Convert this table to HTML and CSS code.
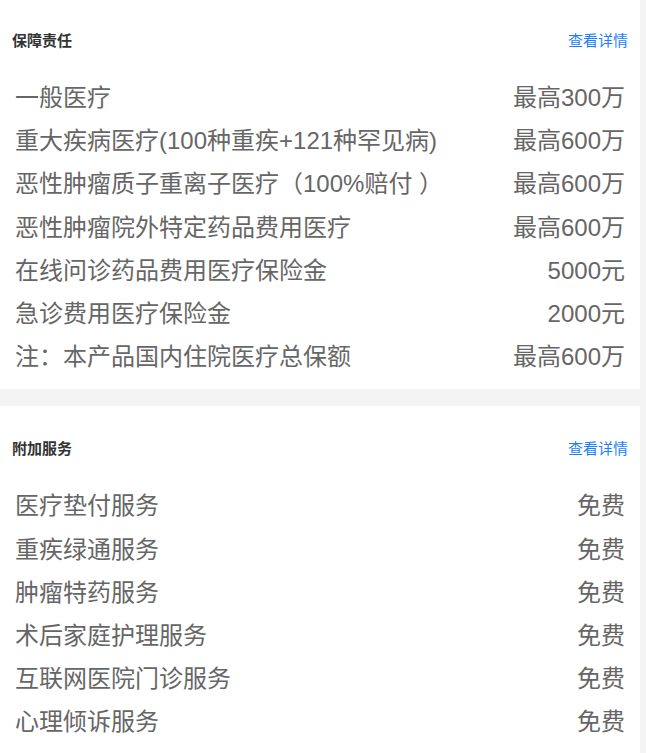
FILE: index.html
```html
<!DOCTYPE html>
<html lang="zh-CN">
<head>
<meta charset="utf-8">
<title>保障责任</title>
<link rel="stylesheet" href="styles.css">
</head>
<body>
<div class="page">
  <section class="card card-first">
    <div class="card-head">
      <h2 class="card-title">保障责任</h2>
      <a class="card-link" href="#">查看详情</a>
    </div>
    <ul class="rows">
      <li class="row"><span class="row-name">一般医疗</span><span class="row-value">最高300万</span></li>
      <li class="row"><span class="row-name">重大疾病医疗(100种重疾+121种罕见病)</span><span class="row-value">最高600万</span></li>
      <li class="row"><span class="row-name">恶性肿瘤质子重离子医疗（100%赔付 ）</span><span class="row-value">最高600万</span></li>
      <li class="row"><span class="row-name">恶性肿瘤院外特定药品费用医疗</span><span class="row-value">最高600万</span></li>
      <li class="row"><span class="row-name">在线问诊药品费用医疗保险金</span><span class="row-value">5000元</span></li>
      <li class="row"><span class="row-name">急诊费用医疗保险金</span><span class="row-value">2000元</span></li>
      <li class="row"><span class="row-name">注：本产品国内住院医疗总保额</span><span class="row-value">最高600万</span></li>
    </ul>
  </section>
  <section class="card">
    <div class="card-head">
      <h2 class="card-title">附加服务</h2>
      <a class="card-link" href="#">查看详情</a>
    </div>
    <ul class="rows">
      <li class="row"><span class="row-name">医疗垫付服务</span><span class="row-value">免费</span></li>
      <li class="row"><span class="row-name">重疾绿通服务</span><span class="row-value">免费</span></li>
      <li class="row"><span class="row-name">肿瘤特药服务</span><span class="row-value">免费</span></li>
      <li class="row"><span class="row-name">术后家庭护理服务</span><span class="row-value">免费</span></li>
      <li class="row"><span class="row-name">互联网医院门诊服务</span><span class="row-value">免费</span></li>
      <li class="row"><span class="row-name">心理倾诉服务</span><span class="row-value">免费</span></li>
    </ul>
  </section>
</div>
</body>
</html>
```

FILE: styles.css
```css
html, body {
  margin: 0;
  padding: 0;
  background: #f4f4f4;
  font-family: "Liberation Sans", "Noto Sans CJK SC", sans-serif;
}
.page {
  width: 640px;
  display: flex;
  flex-direction: column;
  gap: 17px;
}
.card {
  background: #ffffff;
  padding: 30px 0 11px;
}
.card-first {
  margin-top: -2px;
}
.card-head {
  display: flex;
  justify-content: space-between;
  align-items: center;
  height: 22px;
  padding: 0 12px;
  margin-bottom: 26px;
}
.card-title {
  margin: 0;
  font-size: 15px;
  font-weight: bold;
  color: #333333;
}
.card-link {
  font-size: 15px;
  color: #1a7fff;
  text-decoration: none;
}
.rows {
  list-style: none;
  margin: 0;
  padding: 0 15px;
}
.row {
  display: flex;
  justify-content: space-between;
  font-size: 24px;
  line-height: 1.8;
  color: #666666;
}
```
